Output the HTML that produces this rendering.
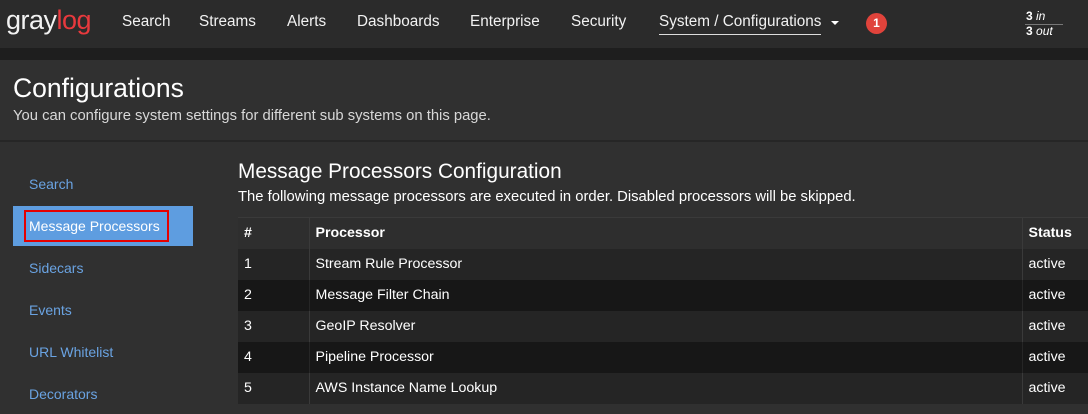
<!DOCTYPE html>
<html><head><meta charset="utf-8"><style>
*{margin:0;padding:0;box-sizing:border-box}
body{width:1088px;height:414px;overflow:hidden;background:#303030;font-family:"Liberation Sans",sans-serif;color:#fff;position:relative}
.nav{position:absolute;left:0;top:0;width:1088px;height:48px;background:#2b2b2b}
.band{position:absolute;left:0;top:48px;width:1088px;height:12px;background:#1e1e1e}
.nav a{position:absolute;top:13px;font-size:15.3px;color:#f2f2f2}
.logo{position:absolute;left:6px;top:5px;font-size:27px;letter-spacing:-0.5px;color:#f2f2f2}
.logo span{color:#e8393d}
.badge{position:absolute;left:866px;top:13px;width:21px;height:21px;border-radius:50%;background:#e0433b;font-size:12px;font-weight:bold;text-align:center;line-height:21px}
.io{position:absolute;left:1026px;font-size:12px;font-weight:bold}
.io i{font-weight:normal}
.hdr{position:absolute;left:0;top:60px;width:1088px;height:82px;background:#303030;border-bottom:2px solid #262626}
h1{position:absolute;left:13px;top:73px;font-size:26.5px;font-weight:normal}
.sub{position:absolute;left:13px;top:108px;font-size:14.8px;color:#d8d8d8}
.side a{position:absolute;left:29px;font-size:14px;color:#6aa3e2}
.act{position:absolute;left:13px;top:206px;width:180px;height:40px;background:#5e9de0}
.box{position:absolute;left:24px;top:210px;width:145px;height:32px;border:2px solid #e50000}
h2{position:absolute;left:238px;top:160px;font-size:20.8px;font-weight:normal}
.desc{position:absolute;left:238px;top:189px;font-size:14.8px}
table{position:absolute;left:238px;top:217px;width:850px;border-collapse:collapse;font-size:14.2px}
td,th{height:31px;padding:0 6px;text-align:left;border-left:1px solid #3a3a3a}
td:first-child,th:first-child{border-left:none}
th{background:#2e2e2e;border-top:1px solid #3a3a3a}
tr.o td{background:#252525}
tr.e td{background:#171717;border-left-color:#262626}
</style></head><body>
<div class="nav">
<div class="logo">gray<span>log</span></div>
<a style="left:122px">Search</a><a style="left:199px">Streams</a><a style="left:287px">Alerts</a><a style="left:357px">Dashboards</a><a style="left:470px">Enterprise</a><a style="left:571px">Security</a>
<a style="left:659px;border-bottom:1px solid #ddd;padding-bottom:3px">System / Configurations</a>
<div style="position:absolute;left:831px;top:21px;border-left:4px solid transparent;border-right:4px solid transparent;border-top:4px solid #fff"></div>
<div class="badge">1</div>
<div class="io" style="top:9px">3 <i>in</i></div>
<div style="position:absolute;left:1025px;top:24px;width:38px;height:1px;background:#777"></div>
<div class="io" style="top:24px">3 <i>out</i></div>
</div>
<div class="band"></div>
<div class="hdr"></div>
<h1>Configurations</h1>
<div class="sub">You can configure system settings for different sub systems on this page.</div>
<div class="act"></div><div class="box"></div>
<div class="side">
<a style="top:176px">Search</a>
<a style="top:218px;color:#fff">Message Processors</a>
<a style="top:260px">Sidecars</a>
<a style="top:302px">Events</a>
<a style="top:344px">URL Whitelist</a>
<a style="top:386px">Decorators</a>
</div>
<h2>Message Processors Configuration</h2>
<div class="desc">The following message processors are executed in order. Disabled processors will be skipped.</div>
<table>
<tr><th style="width:71px">#</th><th>Processor</th><th style="width:66px">Status</th></tr>
<tr class="o"><td>1</td><td>Stream Rule Processor</td><td>active</td></tr>
<tr class="e"><td>2</td><td>Message Filter Chain</td><td>active</td></tr>
<tr class="o"><td>3</td><td>GeoIP Resolver</td><td>active</td></tr>
<tr class="e"><td>4</td><td>Pipeline Processor</td><td>active</td></tr>
<tr class="o"><td>5</td><td>AWS Instance Name Lookup</td><td>active</td></tr>
</table>
</body></html>
